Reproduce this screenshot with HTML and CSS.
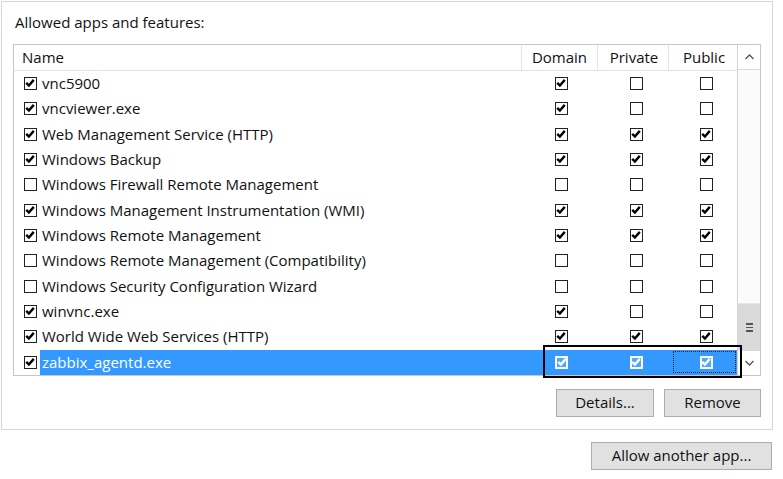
FILE: index.html
```html
<!DOCTYPE html>
<html>
<head>
<meta charset="utf-8">
<link rel="stylesheet" href="styles.css">
</head>
<body>
<div class="frame">
  <div class="title">Allowed apps and features:</div>
  <div class="list">
    <div class="table">
      <div class="head">
        <div class="hc hname">Name</div>
        <div class="hc hd">Domain</div>
        <div class="hc hp">Private</div>
        <div class="hc hpu">Public</div>
      </div>
      <div class="rows" id="rows"></div>
    </div>
    <div class="scroll">
      <div class="sbtn up"><svg width="9" height="6" viewBox="0 0 9 6"><path d="M0.5 5 L4.5 1 L8.5 5" fill="none" stroke="#555" stroke-width="1.3"/></svg></div>
      <div class="track"></div>
      <div class="thumb"><span></span><span></span><span></span></div>
      <div class="sbtn down"><svg width="9" height="6" viewBox="0 0 9 6"><path d="M0.5 1 L4.5 5 L8.5 1" fill="none" stroke="#555" stroke-width="1.3"/></svg></div>
    </div>
    <div class="focusbox"></div>
  </div>
  <div class="btnrow">
    <div class="btn b-details">Details...</div>
    <div class="btn b-remove">Remove</div>
  </div>
</div>
<div class="outer-btnrow">
  <div class="btn b-allow">Allow another app...</div>
</div>
<script src="app.js"></script>
</body>
</html>
```
FILE: app.js
```js
var data = [
  ["vnc5900", 1, 1, 0, 0],
  ["vncviewer.exe", 1, 1, 0, 0],
  ["Web Management Service (HTTP)", 1, 1, 1, 1],
  ["Windows Backup", 1, 1, 1, 1],
  ["Windows Firewall Remote Management", 0, 0, 0, 0],
  ["Windows Management Instrumentation (WMI)", 1, 1, 1, 1],
  ["Windows Remote Management", 1, 1, 1, 1],
  ["Windows Remote Management (Compatibility)", 0, 0, 0, 0],
  ["Windows Security Configuration Wizard", 0, 0, 0, 0],
  ["winvnc.exe", 1, 1, 0, 0],
  ["World Wide Web Services (HTTP)", 1, 1, 1, 1],
  ["zabbix_agentd.exe", 1, 1, 1, 1]
];
var check = '<svg class="ck" width="10" height="10" viewBox="0 0 10 10"><path d="M1.2 4.9 L3.9 7.6 L8.8 1.9" fill="none" stroke-width="2.4"/></svg>';
function cb(on) {
  return '<span class="cb' + (on ? ' on' : '') + '">' + (on ? check : '') + '</span>';
}
var html = '';
data.forEach(function (r, i) {
  var sel = i === data.length - 1;
  html += '<div class="row' + (sel ? ' sel' : '') + '">' +
    '<div class="lead">' + cb(r[1]) + '</div>' +
    '<div class="rest">' +
      '<div class="nm">' + r[0] + '</div>' +
      '<div class="c cd">' + cb(r[2]) + '</div>' +
      '<div class="c cp">' + cb(r[3]) + '</div>' +
      '<div class="c cpu' + (sel ? ' focus' : '') + '">' + cb(r[4]) + '</div>' +
    '</div></div>';
});
document.getElementById('rows').innerHTML = html;
```
FILE: styles.css
```css
html, body { margin: 0; padding: 0; background: #fff; }
body {
  font-family: "Open Sans", "Noto Sans", sans-serif;
  font-size: 15px;
  color: #111;
  width: 783px;
  height: 479px;
  overflow: hidden;
}
.frame {
  margin: 1px 0 0 1px;
  width: 772px;
  height: 429px;
  box-sizing: border-box;
  border: 1px solid #d4d4e4;
}
.title {
  padding: 10px 0 0 13px;
  height: 20px;
  line-height: 20px;
}
.list {
  position: relative;
  margin: 12px 0 0 11px;
  width: 748px;
  height: 332px;
  box-sizing: border-box;
  border: 1px solid #c4c4d6;
  display: flex;
}
.table { width: 723px; display: flex; flex-direction: column; }
.head {
  display: flex;
  height: 25px;
  border-bottom: 1px solid #e3e3ea;
}
.hc {
  line-height: 24px;
  box-sizing: border-box;
  border-right: 1px solid #e3e3ea;
  text-align: center;
}
.hname { width: 508px; text-align: left; padding-left: 8px; }
.hd { width: 76px; }
.hp { width: 71px; padding-left: 2px; }
.hpu { width: 68px; border-right: none; padding-left: 2px; }
.row { display: flex; height: 25.33px; }
.lead { width: 26px; padding-left: 10px; box-sizing: border-box; display: flex; align-items: center; }
.rest { display: flex; width: 697px; }
.nm { width: 482px; padding-left: 2px; box-sizing: border-box; line-height: 24px; white-space: nowrap; }
.c { display: flex; align-items: center; justify-content: center; position: relative; }
.cd { width: 76px; padding-left: 3px; box-sizing: border-box; }
.cp { width: 71px; padding-left: 5px; box-sizing: border-box; }
.cpu { width: 68px; padding-left: 6px; box-sizing: border-box; }
.cb {
  width: 13px;
  height: 13px;
  box-sizing: border-box;
  border: 1.5px solid #222;
  background: #fff;
  position: relative;
  display: block;
}
.ck { position: absolute; left: 0; top: 0; stroke: #000; }
.sel .rest { background: #3399ff; color: #fff; }
.sel .rest .cb { border: 2px solid #fff; background: #4fa8f8; }
.sel .rest .ck { stroke: #fff; left: -0.5px; top: -0.5px; }
.focus::after {
  content: "";
  position: absolute;
  left: 4px; right: 1px; top: 1px; bottom: 2px;
  border: 1px dotted #1a1a2a;
}
.scroll {
  width: 23px;
  border-left: 1px solid #d2d2de;
  box-sizing: border-box;
  display: flex;
  flex-direction: column;
  background: #f7f7f7;
}
.sbtn { display: flex; align-items: center; justify-content: center; background: #fff; }
.up { height: 24px; border-bottom: 1px solid #d8d8e2; }
.track { height: 233px; background: #fbfbfb; }
.thumb {
  height: 48px;
  background: #dadada;
  border-top: 1px solid #e6e6e6;
  box-sizing: border-box;
  display: flex;
  flex-direction: column;
  align-items: center;
  justify-content: center;
  gap: 2px;
}
.thumb span { width: 7px; height: 1.5px; background: #555; display: block; }
.down { flex: 1; }
.focusbox {
  position: absolute;
  left: 529px;
  top: 300px;
  width: 199px;
  height: 33px;
  box-sizing: border-box;
  border: 2px solid #000;
  pointer-events: none;
}
.btnrow {
  margin: 13px 0 0 11px;
  width: 748px;
  display: flex;
  justify-content: flex-end;
  gap: 10px;
}
.btn {
  height: 28px;
  box-sizing: border-box;
  border: 1px solid #adadad;
  background: #e1e1e1;
  line-height: 25px;
  text-align: center;
  color: #111;
}
.b-details { width: 98px; }
.b-remove { width: 97px; }
.outer-btnrow {
  margin-top: 12px;
  width: 772px;
  display: flex;
  justify-content: flex-end;
}
.b-allow { width: 181px; }
```
